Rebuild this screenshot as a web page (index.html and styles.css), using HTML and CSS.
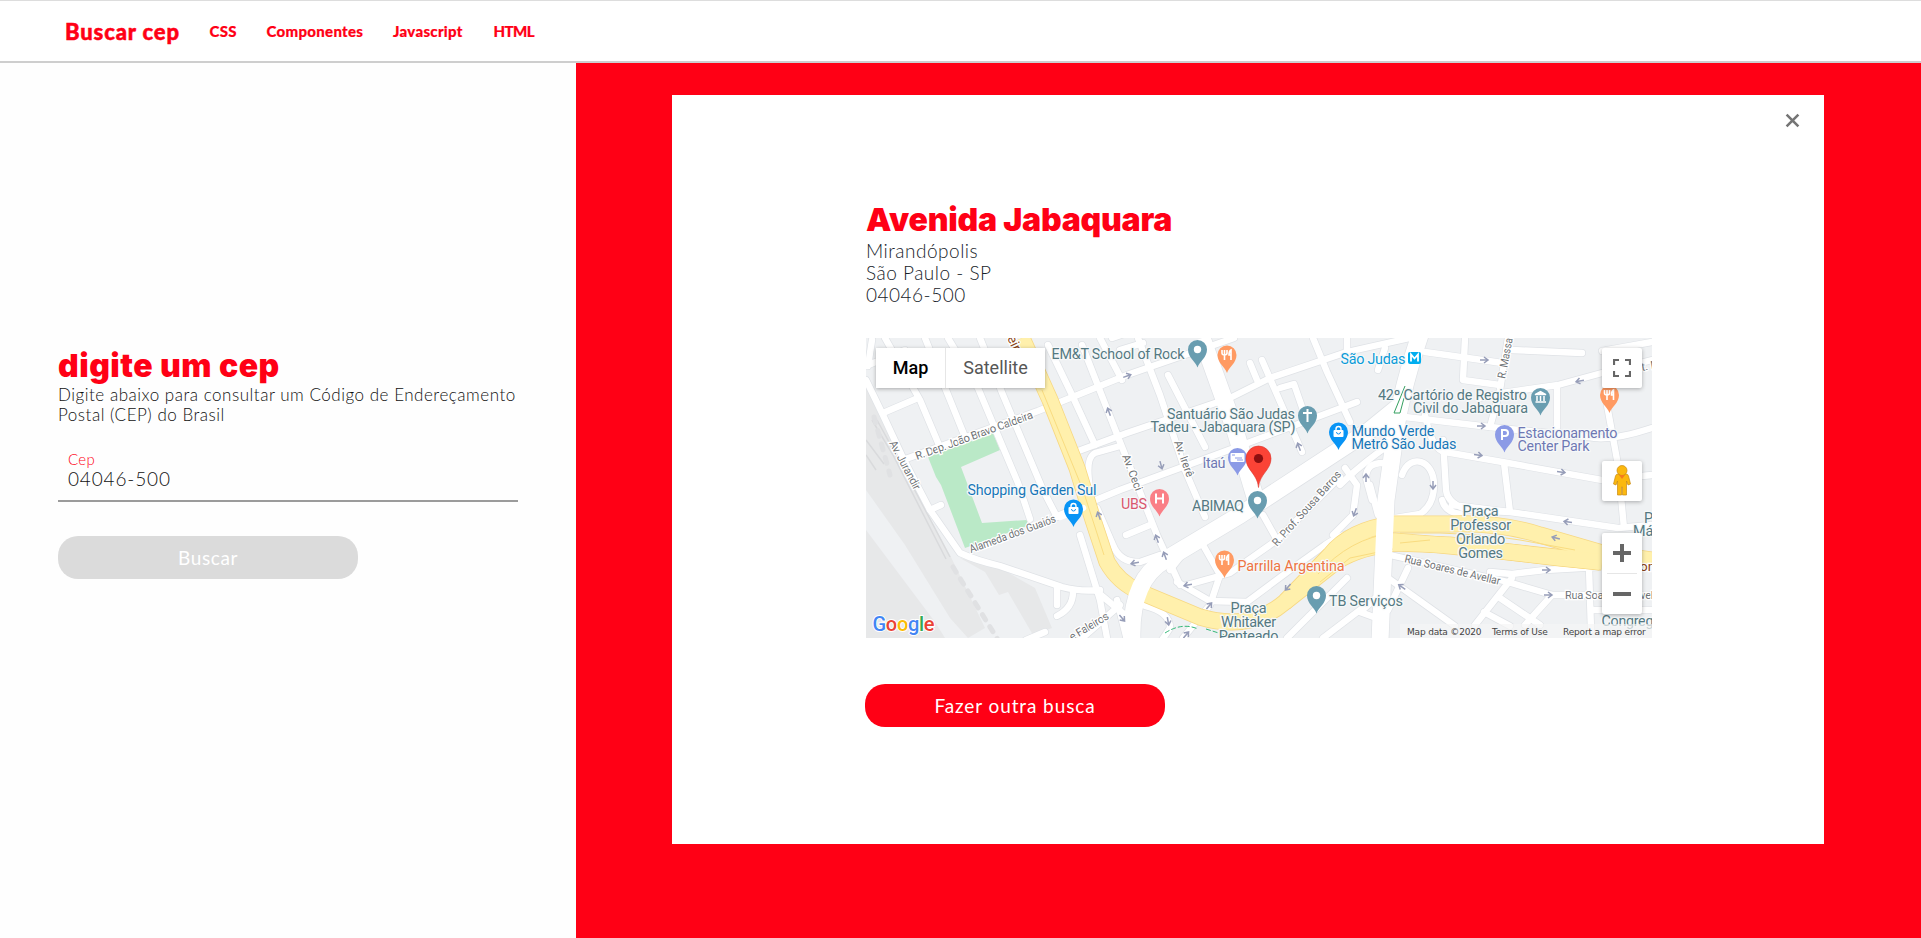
FILE: index.html
```html
<!DOCTYPE html>
<html lang="pt-BR">
<head>
<meta charset="utf-8">
<title>Buscar cep</title>
<link rel="stylesheet" href="styles.css">
</head>
<body>
<header class="topbar">
  <a class="brand">Buscar cep</a>
  <nav class="menu"><a>CSS</a><a>Componentes</a><a>Javascript</a><a class="last">HTML</a></nav>
</header>
<div class="page">
  <aside class="search">
    <h1 class="search-title">digite um cep</h1>
    <p class="search-text">Digite abaixo para consultar um Código de Endereçamento<br>Postal (CEP) do Brasil</p>
    <div class="field"><label class="field-label">Cep</label><span class="field-value">04046-500</span></div>
    <button class="btn btn-disabled"><span>Buscar</span></button>
  </aside>
  <main class="result">
    <section class="card">
      <svg class="close" viewBox="0 0 14 14"><path d="M1.5 1.5l11 11M12.5 1.5l-11 11"/></svg>
      <h2 class="street">Avenida Jabaquara</h2>
      <p class="address"><span>Mirandópolis</span><span>São Paulo - SP</span><span>04046-500</span></p>
      <div class="map">
        <svg class="map-canvas" viewBox="866 338 786 300">
          <defs>
            <path id="pin" d="M0 18C-2 12-9.500 8-9.500 0a9.500 9.500 0 0 1 19 0C9.500 8 2 12 0 18z"/>
            <path id="arrow" d="M-4 0H3M0-3l4 3-4 3"/>
            <g id="fork"><path d="M-2.500-5v10M-5-5v3q0 2 2.500 2T0-2v-3M4 5v-10q-2 1-2 5h2" fill="none" stroke="#fff" stroke-width="1.600"/></g>
            <g id="bag"><rect x="-5" y="-2" width="10" height="7" rx="1" fill="#fff"/><path d="M-2.500-2v-1a2.500 2.500 0 0 1 5 0v1" fill="none" stroke="#fff" stroke-width="1.400"/><path d="M-2 0a2 2 0 0 0 4 0" fill="none" stroke="#1593f0"/></g>
            <g id="thin">
              <path d="M866 380L883 415 903 458 930 510 960 553Q975 560 1000 566L1062 587Q1080 592 1100 590"/>
              <path d="M885 338L920 400 939 445M925 338L965 437M948 338L978 388 1018 483 1030 519M980 338L1003 395 1043 490 1057 517"/>
              <path d="M866 366L905 350M872 340L868 366M883 413L918 398M930 510L941 505M903 460L1038 411 1127 375 1150 367 1234 338"/>
              <path d="M1048 345L1072 395 1095 445M1082 345L1120 442 1138 487 1157 535 1180 585M1100 338L1122 380M1112 338L1150 325"/>
              <path d="M1073 453L1127 433 1230 398 1270 378 1347 352 1410 338M1090 488Q1085 458 1095 453L1120 446"/>
              <path d="M1120 350L1143 343M1138 338L1160 395 1185 470 1205 517M1168 375L1205 447M1313 338L1327 372 1350 422M1347 352V338M1250 363L1257 380M1262 360L1275 390 1302 452M1280 388L1294 384 1303 410"/>
              <path d="M1055 517L1120 490 1237 447 1357 402M1340 477L1277 540 1230 573 1187 585M1263 515L1277 540M1203 545L1220 575 1210 605 1183 638"/>
              <path d="M1340 485Q1355 470 1375 455T1395 445M1345 468L1357 485 1353 515 1333 535M1372 500L1366 478Q1366 462 1385 463M1370 485L1378 515"/>
              <path d="M1402 475C1410 452 1434 460 1434 485Q1434 505 1420 514L1395 518M1377 530Q1350 528 1325 545L1290 570 1247 602 1210 601 1177 582"/>
              <path d="M1097 508L1113 545Q1120 563 1140 562L1160 555M1170 570L1190 545M1126 535L1150 525M1057 587V605M1073 592Q1073 608 1057 616"/>
              <path d="M1080 535L1100 600 1107 638M1095 590L1125 615M1117 600L1127 640M1080 640L1120 605M1145 606Q1170 612 1170 628L1162 640M1026 640L1045 632"/>
              <path d="M1287 638L1347 578M1323 638L1377 597 1360 612 1382 620M1385 348L1378 370"/>
              <path d="M1425 352L1482 360 1502 363M1512 350L1582 353M1602 351L1652 342M1465 338L1463 380 1500 385M1508 338L1500 390 1490 427M1480 398L1502 393 1558 385 1602 373 1652 360M1557 386V427"/>
              <path d="M1405 417L1490 427 1588 437Q1610 442 1652 428M1425 415Q1432 450 1445 452L1508 463 1602 480 1652 475M1443 440L1446 490Q1448 505 1470 510L1510 512M1504 463L1510 512M1607 405L1618 465 1624 528M1442 500Q1445 512 1460 514M1452 505L1510 512 1618 528 1652 525"/>
              <path d="M1390 555L1508 582 1552 595H1652M1490 572L1512 574 1545 570 1598 567M1512 578L1475 625M1552 595L1525 625M1500 598L1540 625M1484 612L1510 626M1388 578L1455 626M1408 568L1388 610M1589 568L1591 630M1591 610H1652"/>
            </g>
            <g id="yellow"><path d="M1022 338L1050 400 1077 468 1093 520 1107 562Q1118 582 1140 592L1200 617Q1250 632 1285 602L1330 555Q1350 530 1393 524L1450 524Q1500 522 1540 535L1602 553 1652 560"/><path d="M1285 602L1337 561Q1360 547 1395 543L1450 545 1560 558 1602 562"/><path d="M1310 575Q1345 546 1395 541L1440 545 1500 551 1600 562"/></g>
          </defs>
          <rect x="866" y="338" width="786" height="300" fill="#eff1f3"/>
          <path class="rail" d="M866 388L890 430 912 485 950 555 985 628 968 638 950 618 905 545 866 490zM866 530L935 622 945 638H866zM960 558L985 572 999 595 1008 592 1033 635 1052 628 1035 588 1000 568z"/>
          <path class="rail-line" d="M872 420L893 455 946 559M877 420L900 462 950 557M866 440L884 464M866 455L876 470"/>
          <path class="rail-dots" d="M953 567L1003 648M874 417L890 475"/>
          <path fill="#bae9c7" d="M928 457L993 433 1000 450 961 467 982 523 1027 520V526L965 548 941 485 936 477z"/>
          <use href="#thin" class="casing"/>
          <path class="wide-casing" d="M1132 640Q1130 580 1165 560L1240 515 1370 430 1402 404M1420 335Q1398 400 1393 450L1386 500 1380 640M1202 338L1235 430 1256 500"/>
          <use href="#thin" class="road"/>
          <use href="#yellow" class="yellow-casing"/><use href="#yellow" class="yellow-road"/>
          <path class="yellow-line" d="M1042 390L1083 490 1104 555M1318 574Q1350 538 1393 533M1320 582L1350 558 1393 549M1400 533H1440Q1490 535 1520 540L1575 550M1400 543L1430 540"/>
          <path class="wide" d="M1132 640Q1130 580 1165 560L1240 515 1370 430 1402 404M1420 335Q1398 400 1393 450L1386 500 1380 640M1202 338L1235 430 1256 500"/>
          <path class="road" d="M1060 517L1083 508"/>
          <path fill="none" stroke="#35b878" stroke-dasharray="5 2" d="M1165 633Q1182 622 1198 629M1206 629L1225 635"/>
          <path fill="none" stroke="#35a060" d="M1394 413L1405 386M1394 413h6l4-15"/>
          <g class="arrows">
            <use href="#arrow" transform="translate(1127 376) rotate(-20)"/><use href="#arrow" transform="translate(1109 412) rotate(-110)"/><use href="#arrow" transform="translate(1161 465) rotate(75)"/><use href="#arrow" transform="translate(1299 447) rotate(-110)"/><use href="#arrow" transform="translate(1484 360)"/><use href="#arrow" transform="translate(1580 381) rotate(170)"/><use href="#arrow" transform="translate(1481 426)"/><use href="#arrow" transform="translate(1478 455) rotate(8)"/><use href="#arrow" transform="translate(1561 472) rotate(8)"/><use href="#arrow" transform="translate(1433 485) rotate(90)"/><use href="#arrow" transform="translate(1366 478) rotate(-90)"/><use href="#arrow" transform="translate(1355 512) rotate(110)"/><use href="#arrow" transform="translate(1099 516) rotate(-110)"/><use href="#arrow" transform="translate(1157 539) rotate(-110)"/><use href="#arrow" transform="translate(1165 556) rotate(-110)"/><use href="#arrow" transform="translate(1135 563) rotate(170)"/><use href="#arrow" transform="translate(1188 585) rotate(170)"/><use href="#arrow" transform="translate(1209 606) rotate(-50)"/><use href="#arrow" transform="translate(1186 635) rotate(-50)"/><use href="#arrow" transform="translate(1168 621) rotate(80)"/><use href="#arrow" transform="translate(1122 618) rotate(50)"/><use href="#arrow" transform="translate(1288 587) rotate(130)"/><use href="#arrow" transform="translate(1568 522) rotate(188)"/><use href="#arrow" transform="translate(1556 538) rotate(195)"/><use href="#arrow" transform="translate(1546 570)"/><use href="#arrow" transform="translate(1548 595)"/><use href="#arrow" transform="translate(1402 587) rotate(215)"/>
          </g>
          <g class="street-labels">
            <text transform="translate(917 460) rotate(-19.800)" textLength="124">R. Dep. João Bravo Caldeira</text>
            <text transform="translate(889 443) rotate(62)" textLength="54">Av. Jurandir</text>
            <text transform="translate(971 553) rotate(-20)" textLength="91" lengthAdjust="spacingAndGlyphs">Alameda dos Guaiós</text>
            <text transform="translate(1174 442) rotate(70)" textLength="38">Av. Irerê</text>
            <text transform="translate(1122 456) rotate(69)" textLength="38">Av. Ceci</text>
            <text transform="translate(1277 547) rotate(-48)" textLength="97" lengthAdjust="spacingAndGlyphs">R. Prof. Sousa Barros</text>
            <text transform="translate(1072 641) rotate(-31)" textLength="44">e Faleiros</text>
            <text transform="translate(1505 379) rotate(-79)" textLength="41" lengthAdjust="spacingAndGlyphs">R. Massa</text>
            <text transform="translate(1404 562) rotate(13.500)" textLength="98" lengthAdjust="spacingAndGlyphs">Rua Soares de Avellar</text>
            <text x="1565" y="599" textLength="100">Rua Soares de Avellar</text>
            <text transform="translate(1642 371) rotate(-10)">t. Mi</text>
            <text transform="translate(1007 338) rotate(65)" class="brown">eira</text>
            <text x="1640" y="571" class="brown">ona</text>
          </g>
          <g class="poi">
            <text x="1051.500" y="359" textLength="133">EM&amp;T School of Rock</text>
            <text x="1340.500" y="363.500" textLength="65" fill="#0a9bd8">São Judas</text>
            <text x="1167" y="418.500" textLength="128">Santuário São Judas</text><text x="1150.500" y="432" textLength="145">Tadeu - Jabaquara (SP)</text>
            <text x="1378" y="399.500" textLength="149">42º Cartório de Registro</text><text x="1413" y="413.200" textLength="115">Civil do Jabaquara</text>
            <g fill="#1877b8"><text x="1351.500" y="435.500" textLength="83">Mundo Verde</text><text x="1351.500" y="449.200" textLength="105">Metrô São Judas</text><text x="967.500" y="495" textLength="129">Shopping Garden Sul</text></g>
            <g fill="#6e78b4"><text x="1517.500" y="437.500" textLength="100">Estacionamento</text><text x="1517.500" y="451.200" textLength="72">Center Park</text><text x="1202.500" y="467.500" textLength="23">Itaú</text></g>
            <text x="1121" y="508.500" textLength="26" fill="#d9566d">UBS</text><text x="1192" y="510.500" textLength="52">ABIMAQ</text>
            <text x="1237.500" y="570.500" textLength="107" fill="#ee7443">Parrilla Argentina</text><text x="1329" y="605.500" textLength="74">TB Serviços</text>
            <g class="centered"><text x="1248.500" y="613">Praça</text><text x="1248.500" y="627">Whitaker</text><text x="1248.500" y="641">Penteado</text><text x="1480.500" y="515.500">Praça</text><text x="1480.500" y="529.500">Professor</text><text x="1480.500" y="543.500">Orlando</text><text x="1480.500" y="557.500">Gomes</text></g>
            <text x="1644" y="522.500">P</text><text x="1633" y="536">Má</text><text x="1601.500" y="626" textLength="52">Congreg</text>
          </g>
          <rect x="1408" y="352" width="13" height="12" rx="2" fill="#00aeef"/><path d="M1411 361.500v-7l3.500 4 3.500-4v7" fill="none" stroke="#fff" stroke-width="1.800"/>
          <g fill="#699db0"><use href="#pin" x="1197.500" y="349.500"/><use href="#pin" x="1307.500" y="415.500"/><use href="#pin" x="1540.500" y="397.500"/><use href="#pin" x="1257.500" y="500.500"/><use href="#pin" x="1316.500" y="595.500"/></g>
          <g fill="#fff"><circle cx="1197.500" cy="349.500" r="3.700"/><circle cx="1257.500" cy="500.500" r="3.700"/><circle cx="1316.500" cy="595.500" r="3.700"/></g>
          <path d="M1307.500 409v13M1303 413h9" stroke="#fff" stroke-width="2"/>
          <path d="M1535 394.500l5.500-3 5.500 3zM1535.500 402h10.500" fill="#fff" stroke="#fff" stroke-width="1.400"/><path d="M1537 396v5M1540.500 396v5M1544 396v5" stroke="#fff" stroke-width="1.500"/>
          <g fill="#ff9a62"><use href="#pin" x="1227" y="355"/><use href="#pin" x="1609.500" y="395"/><use href="#pin" x="1224.500" y="560"/></g>
          <use href="#fork" x="1227" y="355"/><use href="#fork" x="1609.500" y="395"/><use href="#fork" x="1224.500" y="560"/>
          <g fill="#0894f5"><use href="#pin" x="1338.500" y="432"/><use href="#pin" x="1073.500" y="509"/></g><use href="#bag" x="1338.500" y="432"/><use href="#bag" x="1073.500" y="509"/>
          <g fill="#8b9ae6"><use href="#pin" x="1237.500" y="457.500"/><use href="#pin" x="1504.500" y="434.500"/></g>
          <rect x="1230.500" y="453" width="14" height="9" rx="1" fill="#fff"/><path d="M1232 455h3M1235 458h7M1237 460h6" stroke="#8b9ae6"/>
          <path d="M1502 440v-10h3a3 3 0 0 1 0 6h-3" fill="none" stroke="#fff" stroke-width="2"/>
          <use href="#pin" x="1159.500" y="498.500" fill="#fa7f86"/><path d="M1156 493.500v10M1163 493.500v10M1156 498.500h7" stroke="#fff" stroke-width="2"/>
          <path d="M1258.500 487.500C1257.500 474 1246 470 1246 458.500a12.500 12.500 0 0 1 25 0C1271 470 1259.500 474 1258.500 487.500z" fill="#fb4336" stroke="#dc3329" stroke-width=".6"/><circle cx="1258.500" cy="458.500" r="4.600" fill="#8b0f10"/>
          <text class="logo" x="872.500" y="631" textLength="62"><tspan fill="#4285f4">G</tspan><tspan fill="#ea4335">o</tspan><tspan fill="#fbbc05">o</tspan><tspan fill="#4285f4">g</tspan><tspan fill="#34a853">l</tspan><tspan fill="#ea4335">e</tspan></text>
        </svg>
        <div class="map-type"><span class="type-on">Map</span><span class="type-off">Satellite</span></div>
        <div class="control full"><svg viewBox="0 0 18 18" width="18" height="18"><path d="M1 6V1h5M12 1h5v5M17 12v5h-5M6 17H1v-5" fill="none" stroke="#666" stroke-width="2.200"/></svg></div>
        <div class="control pegman"><svg viewBox="0 0 20 32" width="20" height="32"><g fill="#fbb80f" stroke="#c98a12" stroke-width=".7"><path d="M6 9h8q2 0 2.500 2l2 8-2.500 1-1.500-4v14h-4v-8h-1v8h-4V16L4 20l-2.500-1 2-8Q4 9 6 9z"/><circle cx="10" cy="5.500" r="5"/></g><path d="M7 10l3 4 3-4z" fill="#f47b20"/></svg></div>
        <div class="control zoom"><svg viewBox="0 0 40 81" width="40" height="81"><path d="M11 20h18M20 11v18M11 61h18" stroke="#666" stroke-width="4"/><path d="M5 40.500h30" stroke="#e6e6e6"/></svg></div>
        <div class="legal"><span>Map data ©2020</span><span>Terms of Use</span><span>Report a map error</span></div>
      </div>
      <button class="btn btn-primary"><span>Fazer outra busca</span></button>
    </section>
  </main>
</div>
</body>
</html>
```
FILE: styles.css
```css
* { box-sizing: border-box; }
body { margin: 0; height: 938px; overflow: hidden; background: #fefefe; font-family: Lato, "Open Sans", sans-serif; color: #263238; display: flex; flex-direction: column; }
h1, h2, p { margin: 0; }
.topbar { flex: none; height: 63px; border-top: 1px solid #ddd; border-bottom: 2px solid #cecece; background: #fff; display: flex; align-items: center; padding-left: 65px; color: #ff0015; }
.brand { width: 144.5px; font-size: 22px; font-weight: 900; letter-spacing: .85px; white-space: nowrap; -webkit-text-stroke: .5px #ff0015; }
.menu { display: grid; grid-template-columns: 57px 126.500px 100.500px 60px; font-size: 15px; line-height: 20px; margin-top: -1px; font-weight: 900; letter-spacing: .3px; white-space: nowrap; -webkit-text-stroke: .2px #ff0015; }
.last { letter-spacing: -.6px; }
.page { display: flex; flex: 1; min-height: 0; }
.search { width: 576px; flex: none; padding: 282px 58px 0; }
.search-title, .street { font-family: Inter, sans-serif; font-size: 32px; font-weight: 900; color: #ff0015; white-space: nowrap; }
.search-title { height: 41px; line-height: 42px; letter-spacing: .5px; }
.search-text { font-size: 17px; line-height: 20px; font-weight: 300; white-space: nowrap; letter-spacing: .52px; color: #111; margin-top: -1px; }
.field { margin-top: 23px; width: 460px; height: 54px; border-bottom: 2px solid #9b9b9b; padding: 2px 10px 0; display: flex; flex-direction: column; }
.field-label { color: #ff0015; font-size: 15px; line-height: 18px; font-weight: 300; letter-spacing: .3px; }
.field-value { font-size: 19px; line-height: 22px; font-weight: 300; color: #111; letter-spacing: .85px; }
.btn { display: flex; align-items: center; justify-content: center; width: 300px; height: 43px; border: 0; border-radius: 20px; color: #fff; font: 400 19px Lato, sans-serif; letter-spacing: .6px; padding: 0; }
.btn-disabled { background: #dbdbdb; margin-top: 34px; }
.result { flex: 1; background: #ff0015; padding: 32px 97px 0 96px; }
.card { position: relative; background: #fff; height: 749px; padding: 103px 0 0 194px; }
.close { position: absolute; right: 24px; top: 18px; width: 15px; height: 15px; fill: none; stroke: #757575; stroke-width: 2.4; }
.street { height: 42px; line-height: 44px; letter-spacing: -.2px; }
.address { display: flex; flex-direction: column; font-size: 19px; line-height: 22px; font-weight: 300; letter-spacing: .5px; color: #17232a; }
.map { position: relative; width: 786px; height: 300px; margin-top: 32px; overflow: hidden; font-family: Roboto, sans-serif; }
.map-canvas { display: block; width: 786px; height: 300px; }
.rail { fill: #e7e8e9; }
.rail-line { fill: none; stroke: #d9dadc; stroke-width: 1.5; }
.rail-dots { fill: none; stroke: #e0e1e3; stroke-width: 5; stroke-linecap: round; stroke-dasharray: 6 8; }
.casing { fill: none; stroke: #dfe2e6; stroke-width: 7.8; stroke-linecap: round; stroke-linejoin: round; }
.road { fill: none; stroke: #fff; stroke-width: 6.4; stroke-linecap: round; stroke-linejoin: round; }
.wide-casing { fill: none; stroke: #dfe2e6; stroke-width: 18.4; }
.wide { fill: none; stroke: #fff; stroke-width: 17; }
.yellow-casing { fill: none; stroke: #f7d883; stroke-width: 17; }
.yellow-road { fill: none; stroke: #fff0ac; stroke-width: 15.4; }
.yellow-line { fill: none; stroke: #f9dc80; stroke-width: 1; }
.arrows { fill: none; stroke: #969db8; stroke-width: 1.5; }
.street-labels { font-size: 11.2px; fill: #6f7376; stroke: #fff; stroke-width: 2.5px; paint-order: stroke; }
.brown { font-size: 13.5px; fill: #8a4416; }
.poi { font-size: 14.4px; fill: #547982; stroke: #f6f8f9; stroke-width: 2.5px; paint-order: stroke; stroke-linejoin: round; }
.centered { text-anchor: middle; letter-spacing: -.2px; }
.logo { font: 500 20px Roboto, sans-serif; stroke: #fff; stroke-width: 2px; paint-order: stroke; }
.map-type { position: absolute; left: 10px; top: 10px; width: 169px; height: 40px; display: flex; background: #fff; box-shadow: 0 1px 4px rgba(0,0,0,.3); font-size: 18px; line-height: 40px; text-align: center; }
.type-on { width: 70px; font-weight: 500; color: #000; border-right: 1px solid #e6e6e6; }
.type-off { flex: 1; color: #565656; }
.control { position: absolute; right: 10px; width: 40px; height: 40px; background: #fff; border-radius: 2px; box-shadow: 0 1px 4px rgba(0,0,0,.3); display: flex; align-items: center; justify-content: center; }
.full { top: 10px; }
.pegman { top: 123px; }
.zoom { top: 195px; height: 81px; }
.legal { position: absolute; right: 0; bottom: 0; height: 14px; width: 252px; padding: 2px 0 0 7px; display: grid; grid-template-columns: 85px 71px 85px; background: rgba(245,245,245,.7); color: #444; font: 9px/13px "DejaVu Sans", sans-serif; letter-spacing: -.18px; white-space: nowrap; }
.btn-primary { background: #ff0015; margin: 46px 0 0 -1px; letter-spacing: .9px; }
```
